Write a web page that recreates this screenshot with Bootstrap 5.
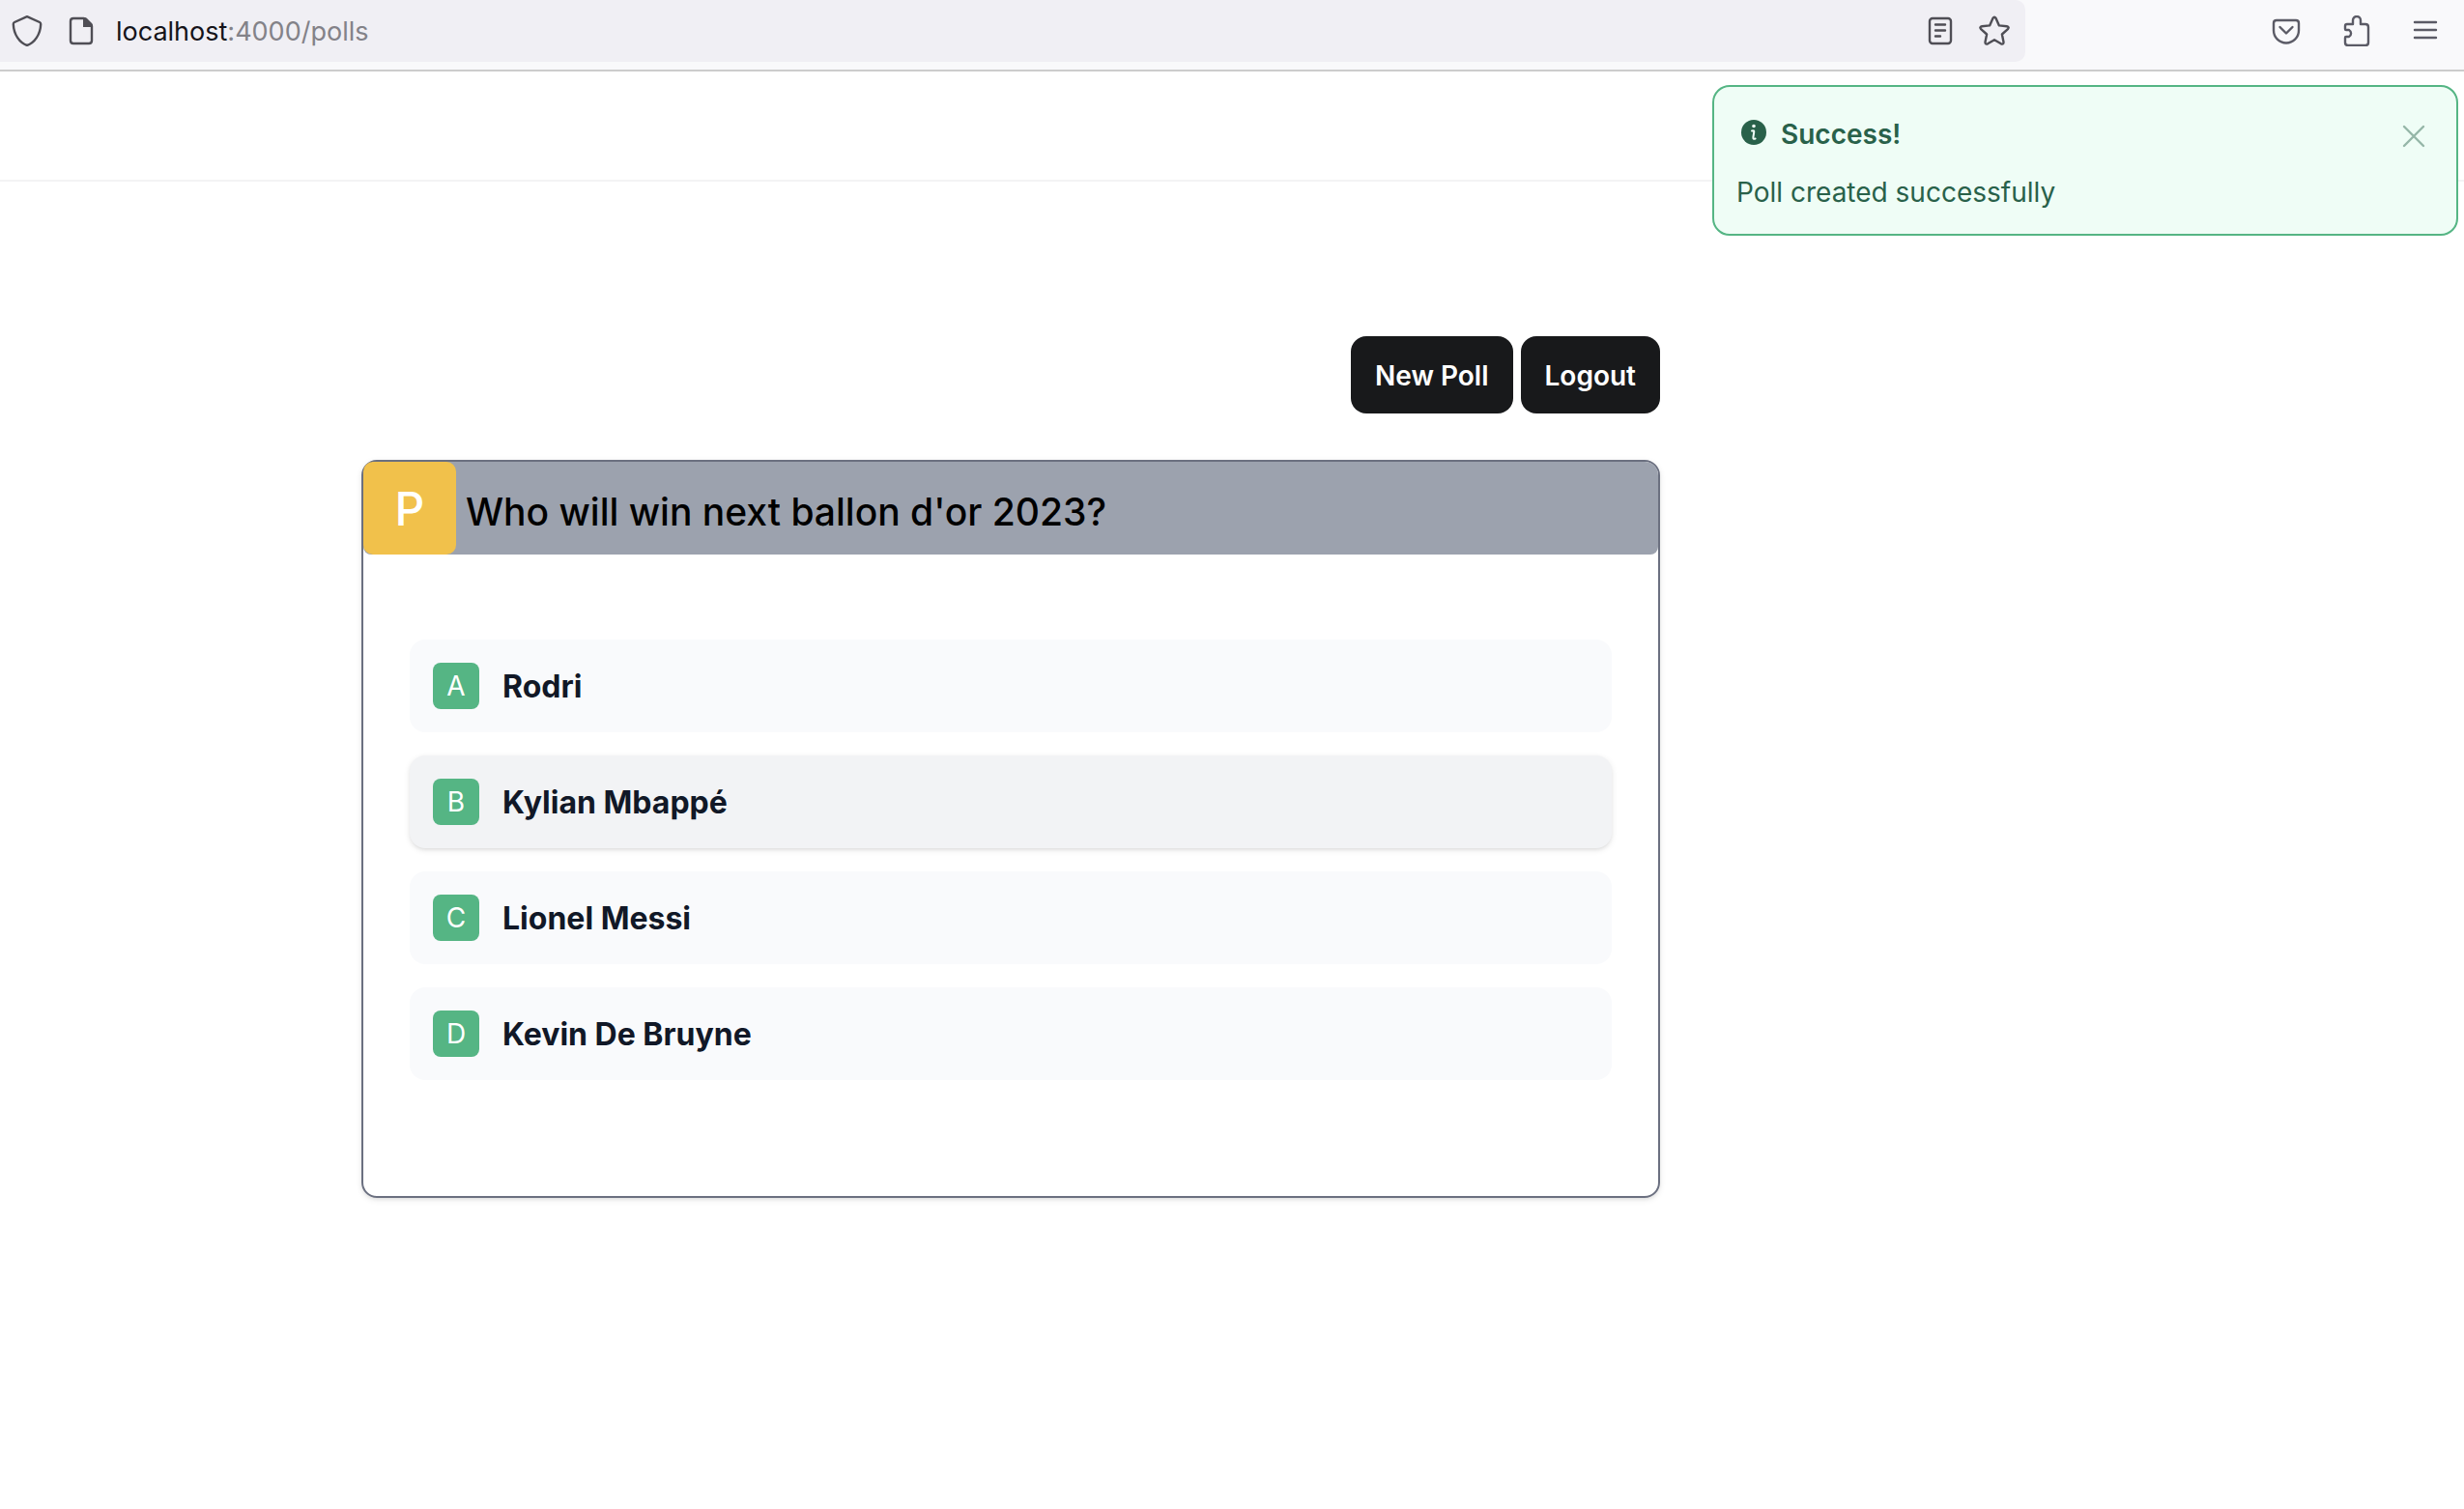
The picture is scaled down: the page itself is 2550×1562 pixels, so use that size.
<!DOCTYPE html>
<html lang="en">
<head>
<meta charset="utf-8">
<meta name="viewport" content="width=device-width, initial-scale=1">
<title>Polls</title>
<link href="https://cdn.jsdelivr.net/npm/bootstrap@5.3.0/dist/css/bootstrap.min.css" rel="stylesheet">
<style>
body{font-family:Inter,"Liberation Sans",sans-serif;font-size:28px;line-height:48px;color:#111827;background:#fff}
svg{display:block;flex:none;fill:none;stroke:currentColor;stroke-width:2.4;stroke-linecap:round;stroke-linejoin:round}
.plain-btn{background:none;border:0;padding:0;color:inherit}
.toolbar{height:74px;background:#f9f9fb;border-bottom:2px solid #ccc;color:#5b5b66}
.urlbar{height:64px;background:#f0eff4;border-radius:0 10px 10px 0;padding:0 16px 0 12px;gap:24px;color:#4f4e55}
.urltext{font-size:27px;color:#15141a;margin-left:-4px;padding-top:2px}
.urltext span{color:#838288}
.tools{width:454px;gap:40px;padding-right:24px;height:64px}
.site-head{height:114px;border-bottom:2px solid #f3f3f4}
.flash{position:absolute;top:88px;right:6px;width:772px;max-width:calc(100% - 12px);padding:25px 28px 19px 23px;border:2px solid #55b584;border-radius:18px;background:#effdf6;color:#29614a}
.flash-title{gap:10px;margin-bottom:12px}
.flash-close{opacity:.45}
.page-main{padding:160px 24px 48px clamp(24px,14.67vw,374px)}
.page-col{max-width:1344px}
.btn-ink{padding:17px 25px 15px;--bs-btn-font-size:28px;--bs-btn-line-height:48px;--bs-btn-border-width:0;--bs-btn-border-radius:16px;--bs-btn-bg:#18191b;--bs-btn-color:#fff;--bs-btn-hover-bg:#3f3f46;--bs-btn-hover-color:#fff}
.poll{border:2px solid #6b7080;border-radius:16px;box-shadow:0 2px 6px rgba(0,0,0,.1),0 2px 4px -2px rgba(0,0,0,.1)}
.poll-head{background:#9ca2ae;border-radius:14px 14px 8px 8px;height:96px}
.poll-mark{width:96px;height:96px;padding-top:2px;border-radius:10px;background:#f1c14b;font-size:48px}
.poll-title{font-size:39px;line-height:48px;padding:8px 10px 0;color:#000}
.poll-list{padding:88px 48px 120px;gap:24px}
.choice{height:96px;padding:0 24px;gap:24px;border:0;border-radius:16px;background:#f9fafc;color:#111827;font-size:32px}
.choice-on{background:#f2f3f5;box-shadow:0 2px 6px rgba(0,0,0,.1),0 2px 4px -2px rgba(0,0,0,.1)}
.choice-name{padding-top:2px}
.choice-key{width:48px;height:48px;border-radius:8px;background:#55b584;font-size:28px}
</style>
</head>
<body>
<nav class="toolbar d-flex" aria-label="Browser">
  <div class="urlbar d-flex align-items-center flex-grow-1">
    <button class="plain-btn" type="button" aria-label="Tracking protection"><svg width="32" height="32" viewBox="0 0 32 32"><path d="M16 1.200 29 7q1.200.6 1.200 2C29.800 20 23.500 28.500 16 31 8.500 28.500 2.200 20 1.800 9q0-1.400 1.200-2z"/></svg></button>
    <button class="plain-btn" type="button" aria-label="Site information"><svg width="32" height="32" viewBox="0 0 32 32"><path d="M18.500 3H8Q5 3 5 6v20q0 3 3 3h16q3 0 3-3V11"/><path fill="currentColor" stroke="none" d="M18 2h2q1 0 2 1l5 5q1 1 1 2v2H18z"/></svg></button>
    <a class="urltext text-decoration-none flex-grow-1" href="#">localhost<span>:4000/polls</span></a>
    <button class="plain-btn" type="button" aria-label="Reader view"><svg width="32" height="32" viewBox="0 0 32 32"><rect x="5" y="3" width="22" height="26" rx="3"/><path d="M11 9.500h10M11 15.500h10M11 21.500h5"/></svg></button>
    <button class="plain-btn" type="button" aria-label="Bookmark"><svg width="32" height="32" viewBox="0 0 32 32"><path d="M14.400 3q1.600-2.400 3.200 0l3.300 7.400 8 .9q2.900.6 1 2.800l-6 5.400 1.600 7.900q.2 3-2.600 1.900L16 25.300l-6.900 4q-2.800 1.100-2.600-1.900l1.600-7.900-6-5.400q-1.900-2.200 1-2.800l8-.9z"/></svg></button>
  </div>
  <div class="tools d-flex align-items-center justify-content-end">
    <button class="plain-btn" type="button" aria-label="Pocket"><svg width="32" height="32" viewBox="0 0 32 32"><path d="M6 5h20q3 0 3 3v7.500a13 13 0 0 1-26 0V8q0-3 3-3z"/><path d="m9.500 12 6.500 6.500 6.500-6.500"/></svg></button>
    <button class="plain-btn" type="button" aria-label="Extensions"><svg width="32" height="32" viewBox="0 0 32 32"><path d="M7 9h6V5a4 4 0 0 1 8 0v4h5q3 0 3 3v16q0 3-3 3H8q-3 0-3-3v-5q0-1 1-1h3a4 4 0 0 0 0-7H6q-1 0-1-1v-3q0-2 2-2z"/></svg></button>
    <button class="plain-btn" type="button" aria-label="Menu"><svg width="32" height="32" viewBox="0 0 32 32"><path d="M5 7h22M5 15h22M5 23h22"/></svg></button>
  </div>
</nav>
<header class="site-head"></header>

<div class="flash" role="alert">
  <div class="flash-title d-flex align-items-center">
    <svg width="36" height="32" viewBox="-2 0 36 32"><circle cx="16" cy="14" r="13" fill="currentColor" stroke="none"/><circle cx="16" cy="7.500" r="1.800" fill="#effdf6" stroke="none"/><path stroke="#effdf6" stroke-width="2" d="M14 12.500q2.800-1 2.200 1.500L15.400 19q-.4 2.600 2.200 1.500"/></svg>
    <span class="fw-semibold flex-grow-1">Success!</span>
    <button class="plain-btn flash-close" type="button" aria-label="close"><svg width="32" height="32" viewBox="0 0 32 32"><path d="m6 8 20 20M26 8 6 28"/></svg></button>
  </div>
  <p class="mb-0">Poll created successfully</p>
</div>

<main class="page-main">
  <div class="page-col">
    <div class="d-flex justify-content-end gap-2 mb-5">
      <button class="btn btn-ink fw-semibold" type="button">New Poll</button>
      <button class="btn btn-ink fw-semibold" type="button">Logout</button>
    </div>
    <section class="poll">
      <div class="poll-head d-flex align-items-center">
        <span class="poll-mark d-flex align-items-center justify-content-center flex-shrink-0 text-white fw-medium">P</span>
        <h1 class="poll-title mb-0 fw-medium">Who will win next ballon d'or 2023?</h1>
      </div>
      <div class="poll-list d-flex flex-column">
        <button class="choice d-flex align-items-center fw-bold" type="button"><span class="choice-key d-flex align-items-center justify-content-center text-white fw-normal">A</span><span class="choice-name">Rodri</span></button>
        <button class="choice choice-on d-flex align-items-center fw-bold" type="button"><span class="choice-key d-flex align-items-center justify-content-center text-white fw-normal">B</span><span class="choice-name">Kylian Mbappé</span></button>
        <button class="choice d-flex align-items-center fw-bold" type="button"><span class="choice-key d-flex align-items-center justify-content-center text-white fw-normal">C</span><span class="choice-name">Lionel Messi</span></button>
        <button class="choice d-flex align-items-center fw-bold" type="button"><span class="choice-key d-flex align-items-center justify-content-center text-white fw-normal">D</span><span class="choice-name">Kevin De Bruyne</span></button>
      </div>
    </section>
  </div>
</main>
<script src="https://cdn.jsdelivr.net/npm/bootstrap@5.3.0/dist/js/bootstrap.bundle.min.js"></script>
</body>
</html>
